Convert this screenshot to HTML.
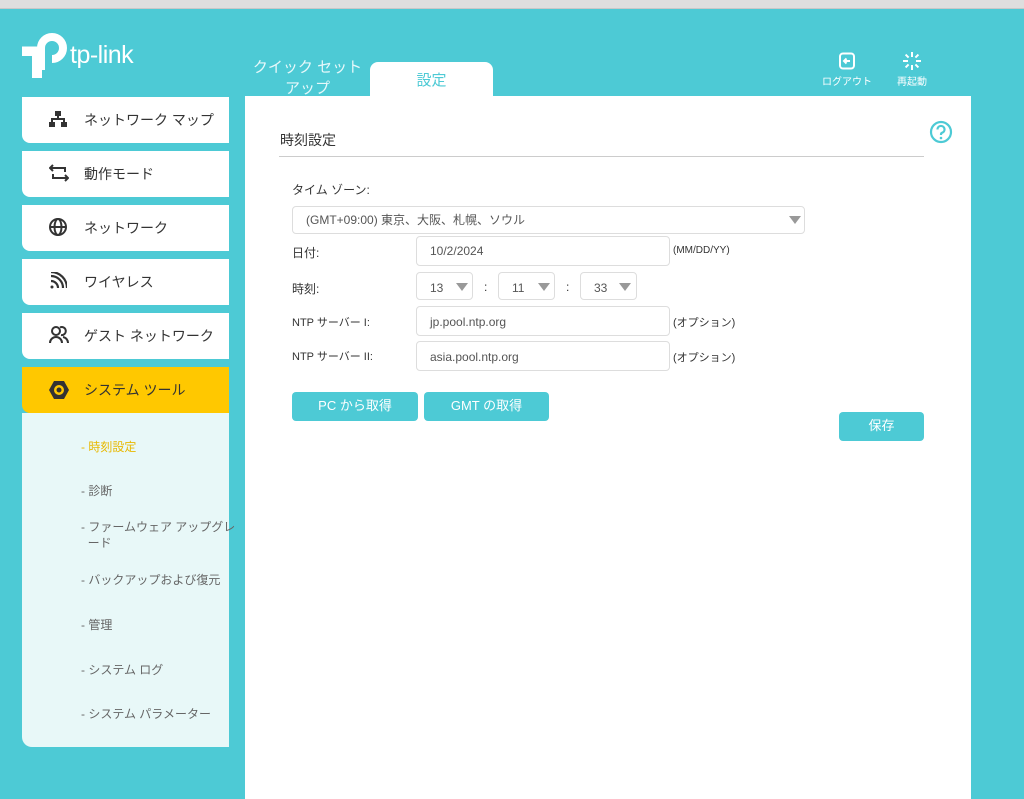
<!DOCTYPE html>
<html><head><meta charset="utf-8"><style>
*{margin:0;padding:0;box-sizing:border-box}
body{width:1024px;height:799px;overflow:hidden;background:#4dcad5;font-family:"Liberation Sans","Noto Sans CJK JP",sans-serif;position:relative;color:#333}
.abs{position:absolute}
.top{left:0;top:0;width:1024px;height:9px;background:#dedede;border-bottom:1px solid #c8c8c8}
.mi{position:absolute;left:22px;width:207px;height:46px;background:#fff;border-radius:0 0 0 8px;font-size:14px;color:#333;line-height:46px;padding-left:62px}
.mi svg{position:absolute;left:27px;top:13px}
.sub{left:22px;top:413px;width:207px;height:334px;background:#e8f8f8;border-radius:0 0 0 10px}
.si{position:absolute;left:81px;font-size:12px;color:#666;line-height:16px}
.panel{left:245px;top:96px;width:726px;height:703px;background:#fff}
.lbl{position:absolute;font-size:12px;color:#333}
.inp{position:absolute;border:1px solid #ddd;border-radius:4px;background:#fff;font-size:12px;color:#555;padding-left:13px}
.arr{position:absolute;width:0;height:0;border-left:6px solid transparent;border-right:6px solid transparent;border-top:8px solid #999}
.btn{position:absolute;background:#4dcad5;color:#fff;border-radius:4px;font-size:13px;text-align:center;line-height:28px}
</style></head><body>
<div class="abs top"></div>
<!-- logo -->
<svg class="abs" style="left:21px;top:32px" width="46" height="46" viewBox="0 0 46 46">
<path d="M20 38 V16 A11 11 0 1 1 31 27" fill="none" stroke="#fff" stroke-width="8"/>
<path d="M1 19 h19 M16 19 V46" stroke="#fff" stroke-width="9" fill="none"/>
<rect x="1" y="15" width="19" height="9" fill="#fff"/>
<rect x="11" y="15" width="10" height="31" fill="#fff"/>
</svg>
<div class="abs" style="left:70px;top:41px;font-size:25px;color:#fff;letter-spacing:-0.5px">tp-link</div>
<div class="abs" style="left:250px;top:57px;width:115px;text-align:center;font-size:15px;color:#e6f8fa;line-height:21px">クイック セット<br>アップ</div>
<div class="abs" style="left:370px;top:62px;width:123px;height:36px;background:#fff;border-radius:8px 8px 0 0;text-align:center;line-height:38px;font-size:15px;color:#4dcad5">設定</div>
<svg class="abs" style="left:838px;top:52px" width="18" height="18" viewBox="0 0 18 18"><rect x="2" y="1.5" width="14" height="15" rx="3" fill="none" stroke="#fff" stroke-width="2"/><path d="M12 9H6M8.5 6.5L6 9l2.5 2.5" stroke="#fff" stroke-width="2" fill="none"/></svg>
<div class="abs" style="left:815px;top:73px;font-size:10px;color:#fff;width:64px;text-align:center">ログアウト</div>
<svg class="abs" style="left:902px;top:51px" width="20" height="20" viewBox="0 0 20 20" stroke="#fff" stroke-width="2"><path d="M10 1v5M10 14v5M1 10h5M14 10h5M3.6 3.6l3 3M13.4 13.4l3 3M16.4 3.6l-3 3M6.6 13.4l-3 3"/></svg>
<div class="abs" style="left:890px;top:73px;font-size:10px;color:#fff;width:44px;text-align:center">再起動</div>

<div class="mi" style="top:97px"><svg width="18" height="18" viewBox="0 0 18 18" fill="#333"><rect x="6" y="1" width="6" height="5"/><rect x="8" y="6" width="2" height="3"/><rect x="2" y="8" width="14" height="2"/><rect x="2" y="8" width="2" height="4"/><rect x="14" y="8" width="2" height="4"/><rect x="0" y="12" width="6" height="5"/><rect x="12" y="12" width="6" height="5"/></svg>ネットワーク マップ</div>
<div class="mi" style="top:151px"><svg width="20" height="18" viewBox="0 0 20 18" fill="none" stroke="#333" stroke-width="2"><path d="M4 1L1 4l3 3M1 4h15v4M16 17l3-3-3-3M19 14H4v-4"/></svg>動作モード</div>
<div class="mi" style="top:205px"><svg width="18" height="18" viewBox="0 0 18 18" fill="none" stroke="#333" stroke-width="2"><circle cx="9" cy="9" r="8"/><ellipse cx="9" cy="9" rx="3.5" ry="8"/><path d="M1 9h16"/></svg>ネットワーク</div>
<div class="mi" style="top:259px"><svg width="18" height="18" viewBox="0 0 18 18" fill="none" stroke="#333" stroke-width="2.2"><circle cx="3" cy="15" r="1.5" fill="#333" stroke="none"/><path d="M2 9a7 7 0 0 1 7 7M2 4a12 12 0 0 1 12 12M2 0a16 16 0 0 1 16 16"/></svg>ワイヤレス</div>
<div class="mi" style="top:313px"><svg width="20" height="18" viewBox="0 0 20 18" fill="none" stroke="#333" stroke-width="2"><circle cx="7" cy="5" r="4"/><path d="M1 17a6 6 0 0 1 12 0M11 1.5a4 4 0 1 1 1 7.5M14 11a6 6 0 0 1 5 6"/></svg>ゲスト ネットワーク</div>
<div class="mi" style="top:367px;background:#ffc800;height:46px;border-radius:0 0 0 8px"><svg width="20" height="20" viewBox="0 0 20 20"><path d="M5 1h10l5 9-5 9H5L0 10z" fill="#333"/><circle cx="10" cy="10" r="5" fill="#ffc800"/><circle cx="10" cy="10" r="2.5" fill="#333"/></svg>システム ツール</div>
<div class="abs sub"></div>
<div class="si" style="top:439px;color:#e8b800">- 時刻設定</div>
<div class="si" style="top:483px">- 診断</div>
<div class="si" style="top:519px">- ファームウェア アップグレ<br>&nbsp;&nbsp;ード</div>
<div class="si" style="top:572px">- バックアップおよび復元</div>
<div class="si" style="top:617px">- 管理</div>
<div class="si" style="top:662px">- システム ログ</div>
<div class="si" style="top:706px">- システム パラメーター</div>

<div class="abs panel"></div>
<svg class="abs" style="left:929px;top:120px" width="24" height="24" viewBox="0 0 24 24"><circle cx="12" cy="12" r="10" fill="none" stroke="#4dcad5" stroke-width="2.2"/><path d="M8.5 9.5a3.5 3.5 0 1 1 4.5 3.3c-.8.3-1 .8-1 1.7v.5" fill="none" stroke="#4dcad5" stroke-width="2.2"/><circle cx="12" cy="18" r="1.3" fill="#4dcad5"/></svg>
<div class="lbl" style="left:280px;top:130px;font-size:14px">時刻設定</div>
<div class="abs" style="left:279px;top:156px;width:645px;height:1px;background:#ccc"></div>
<div class="lbl" style="left:292px;top:181px">タイム ゾーン:</div>
<div class="inp" style="left:292px;top:206px;width:513px;height:28px;line-height:26px">(GMT+09:00) 東京、大阪、札幌、ソウル</div>
<div class="arr" style="left:789px;top:216px"></div>
<div class="lbl" style="left:292px;top:244px">日付:</div>
<div class="inp" style="left:416px;top:236px;width:254px;height:30px;line-height:28px">10/2/2024</div>
<div class="lbl" style="left:673px;top:245px;font-size:10px">(MM/DD/YY)</div>
<div class="lbl" style="left:292px;top:280px">時刻:</div>
<div class="inp" style="left:416px;top:272px;width:57px;height:28px;line-height:30px">13</div><div class="arr" style="left:456px;top:283px"></div>
<div class="lbl" style="left:484px;top:280px">:</div>
<div class="inp" style="left:498px;top:272px;width:57px;height:28px;line-height:30px">11</div><div class="arr" style="left:538px;top:283px"></div>
<div class="lbl" style="left:566px;top:280px">:</div>
<div class="inp" style="left:580px;top:272px;width:57px;height:28px;line-height:30px">33</div><div class="arr" style="left:619px;top:283px"></div>
<div class="lbl" style="left:292px;top:314px;font-size:11px">NTP サーバー I:</div>
<div class="inp" style="left:416px;top:306px;width:254px;height:30px;line-height:30px">jp.pool.ntp.org</div>
<div class="lbl" style="left:673px;top:314px;font-size:11px">(オプション)</div>
<div class="lbl" style="left:292px;top:348px;font-size:11px">NTP サーバー II:</div>
<div class="inp" style="left:416px;top:341px;width:254px;height:30px;line-height:30px">asia.pool.ntp.org</div>
<div class="lbl" style="left:673px;top:349px;font-size:11px">(オプション)</div>
<div class="btn" style="left:292px;top:392px;width:126px;height:29px">PC から取得</div>
<div class="btn" style="left:424px;top:392px;width:125px;height:29px">GMT の取得</div>
<div class="btn" style="left:839px;top:412px;width:85px;height:29px">保存</div>
</body></html>
